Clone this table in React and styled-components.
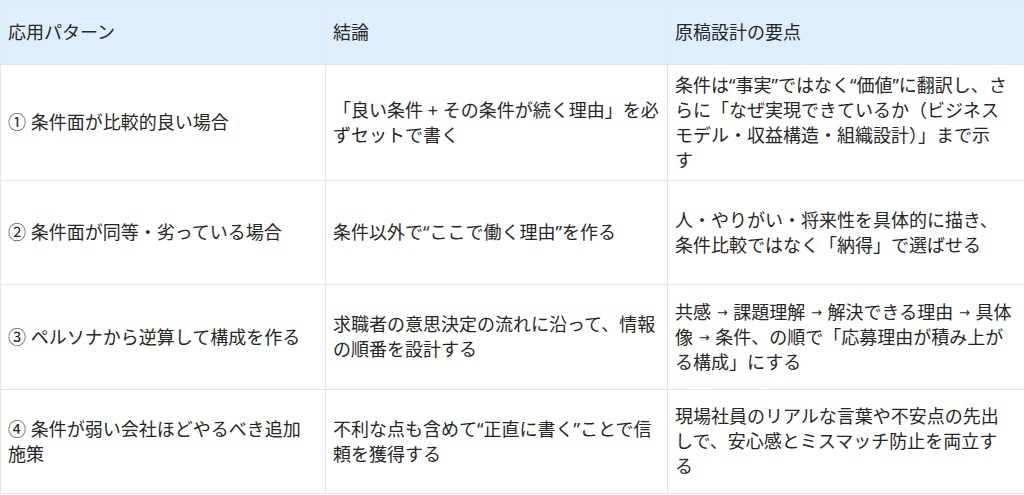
import React from 'react';
import styled, { createGlobalStyle } from 'styled-components';

const GlobalStyle = createGlobalStyle`
    html, body {
        margin: 0;
        padding: 0;
        background: #ffffff;
    }
`;

const Table = styled.table`
    width: 1024px;
    table-layout: fixed;
    border-collapse: collapse;
    font-family: "Noto Sans", "Noto Sans CJK JP", sans-serif;
    font-size: 18px;
    line-height: 25px;
    color: #262626;
`;

const HeadRow = styled.tr`
    height: 64px;
    background: #ddeefc;
`;

const Row = styled.tr`
    height: ${props => props.h}px;
`;

const Th = styled.th`
    box-sizing: border-box;
    width: ${props => props.w}px;
    padding: 0 7px;
    text-align: left;
    font-weight: 400;
    border: 1px solid #e3e8ec;
    border-bottom-color: #d8e2ea;
`;

const Td = styled.td`
    box-sizing: border-box;
    padding: 4px 7px;
    vertical-align: middle;
    border: 1px solid #e6e6e6;
    white-space: nowrap;
`;

const Arrow = styled.span`
    font-family: "DejaVu Sans", sans-serif;
    font-size: 13px;
    vertical-align: 2px;
    margin: 0 1px;
`;

const columns = [
    { label: '応用パターン', w: 325 },
    { label: '結論', w: 342 },
    { label: '原稿設計の要点', w: 357 },
];

// each cell is a list of lines as they wrap in the original
const rows = [
    {
        h: 116,
        cells: [
            ['① 条件面が比較的良い場合'],
            ['「良い条件 + その条件が続く理由」を必', 'ずセットで書く'],
            [
                '条件は“事実”ではなく“価値”に翻訳し、さ',
                'らに「なぜ実現できているか（ビジネス',
                'モデル・収益構造・組織設計）」まで示',
                'す',
            ],
        ],
    },
    {
        h: 104,
        cells: [
            ['② 条件面が同等・劣っている場合'],
            ['条件以外で“ここで働く理由”を作る'],
            ['人・やりがい・将来性を具体的に描き、', '条件比較ではなく「納得」で選ばせる'],
        ],
    },
    {
        h: 105,
        cells: [
            ['③ ペルソナから逆算して構成を作る'],
            ['求職者の意思決定の流れに沿って、情報', 'の順番を設計する'],
            [
                '共感 → 課題理解 → 解決できる理由 → 具体',
                '像 → 条件、の順で「応募理由が積み上が',
                'る構成」にする',
            ],
        ],
    },
    {
        h: 104,
        cells: [
            ['④ 条件が弱い会社ほどやるべき追加', '施策'],
            ['不利な点も含めて“正直に書く”ことで信', '頼を獲得する'],
            [
                '現場社員のリアルな言葉や不安点の先出',
                'しで、安心感とミスマッチ防止を両立す',
                'る',
            ],
        ],
    },
];

const renderLine = line =>
    line.split('→').map((part, k) => (
        <React.Fragment key={k}>
            {k > 0 && <Arrow>→</Arrow>}
            {part}
        </React.Fragment>
    ));

export default function App() {
    return (
        <>
            <GlobalStyle />
            <Table>
                <thead>
                    <HeadRow>
                        {columns.map(col => (
                            <Th key={col.label} w={col.w}>{col.label}</Th>
                        ))}
                    </HeadRow>
                </thead>
                <tbody>
                    {rows.map((row, i) => (
                        <Row key={i} h={row.h}>
                            {row.cells.map((lines, j) => (
                                <Td key={j}>
                                    {lines.map((line, k) => (
                                        <React.Fragment key={k}>
                                            {k > 0 && <br />}
                                            {renderLine(line)}
                                        </React.Fragment>
                                    ))}
                                </Td>
                            ))}
                        </Row>
                    ))}
                </tbody>
            </Table>
        </>
    );
}
